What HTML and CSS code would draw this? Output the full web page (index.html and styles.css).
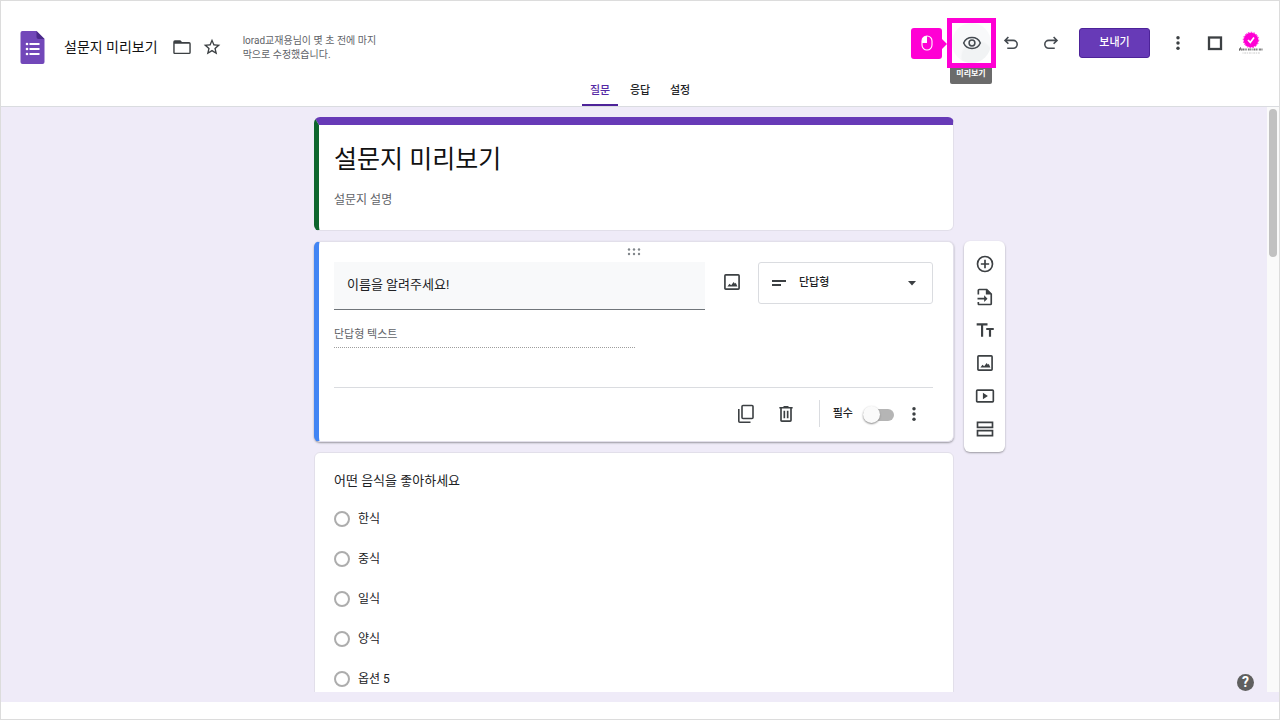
FILE: index.html
```html
<!DOCTYPE html>
<html lang="ko">
<head>
<meta charset="utf-8">
<meta name="viewport" content="width=device-width, initial-scale=1">
<title>설문지 미리보기</title>
<link rel="stylesheet" href="styles.css">
</head>
<body>
<svg class="sprite" aria-hidden="true">
  <symbol id="image" viewBox="0 0 24 24"><path d="M19.500 4.500v15h-15v-15h15m0-2h-15a2 2 0 0 0-2 2v15c0 1.100.9 2 2 2h15a2 2 0 0 0 2-2v-15a2 2 0 0 0-2-2zM6.500 17.500l2.500-3.500 2 2 3-4 1.500 2 1-1 2 4.500z"/></symbol>
  <symbol id="more" viewBox="0 0 24 24"><circle cx="12" cy="5" r="2.300"/><circle cx="12" cy="12" r="2.300"/><circle cx="12" cy="19" r="2.300"/></symbol>
</svg>
<div class="app">
  <header class="header">
    <div class="bar">
      <div class="bar-left">
        <svg class="logo" viewBox="0 0 24 33" role="img" aria-label="Forms"><path fill="#7248b9" d="M2 0h14l8 8v23a2 2 0 0 1-2 2H2a2 2 0 0 1-2-2V2a2 2 0 0 1 2-2z"/><path fill="#4b2a8a" d="M16 0l8 8h-6a2 2 0 0 1-2-2z"/><path fill="#fff" d="M9 12h10v2H9zm0 5h10v2H9zm0 5h10v2H9z"/><circle cx="6.500" cy="13" r="1.300" fill="#fff"/><circle cx="6.500" cy="18" r="1.300" fill="#fff"/><circle cx="6.500" cy="23" r="1.300" fill="#fff"/></svg>
        <h1 class="doc-title">설문지 미리보기</h1>
        <button class="icon-btn" aria-label="폴더로 이동"><svg class="icon-20" viewBox="0 0 24 24"><path d="M20.500 6H12l-2-2H3.500a2 2 0 0 0-2 2v12.500c0 1.100.9 2 2 2h17a2 2 0 0 0 2-2V8a2 2 0 0 0-2-2zm.3 12.800H3.200V8h17.600z"/></svg></button>
        <button class="icon-btn" aria-label="별표"><svg class="icon-20" viewBox="0 0 24 24"><path d="M22 9.240l-7.190-.62L12 2 9.190 8.630 2 9.240l5.460 4.730L5.820 21 12 17.270 18.180 21l-1.630-7.030zM12 15.400l-3.760 2.270 1-4.280-3.320-2.880 4.380-.38L12 6.100l1.710 4.040 4.380.38-3.320 2.880 1 4.280z"/></svg></button>
        <p class="saved">lorad교재용님이 몇 초 전에 마지막으로 수정했습니다.</p>
      </div>
      <div class="bar-right">
        <span class="click-badge"><svg viewBox="0 0 12 16" class="mouse"><rect x="1" y="1" width="10" height="14" rx="5" fill="none" stroke="#fff" stroke-width="1.100"/><path d="M6 1a5 5 0 0 0-5 5v2h5z" fill="#fff"/></svg></span>
        <span class="preview">
          <button class="preview-btn" aria-label="미리보기" aria-describedby="tip"><svg class="icon-20" viewBox="0 0 24 24"><path fill="none" stroke="#444a50" stroke-width="1.800" d="M2 12c1.700-4 5.500-6.500 10-6.500S20.300 8 22 12c-1.700 4-5.500 6.500-10 6.500S3.700 16 2 12z"/><circle cx="12" cy="12" r="3.500" fill="none" stroke="#444a50" stroke-width="1.800"/></svg></button>
          <span class="tip" id="tip" role="tooltip">미리보기</span>
        </span>
        <button class="icon-btn undo" aria-label="실행취소"><svg class="icon-18" viewBox="0 0 24 24"><path fill="none" stroke="#444a50" stroke-width="2.100" d="M8.500 4 4 8.500 8.500 13M4 8.500h11a5.200 5.200 0 0 1 0 10.500H7"/></svg></button>
        <button class="icon-btn redo" aria-label="재실행"><svg class="icon-18" viewBox="0 0 24 24"><path fill="none" stroke="#444a50" stroke-width="2.100" d="M15.500 4 20 8.500 15.500 13M20 8.500H9A5.200 5.200 0 0 0 9 19h8"/></svg></button>
        <button class="send">보내기</button>
        <button class="icon-btn menu" aria-label="더보기"><svg class="icon-18" viewBox="0 0 24 24"><use href="#more"/></svg></button>
        <button class="icon-btn" aria-label="앱"><svg class="icon-18" viewBox="0 0 18 18"><rect x="3" y="3.500" width="12" height="11.500" fill="none" stroke="#3c4043" stroke-width="2.300"/></svg></button>
        <button class="avatar" aria-label="계정"><svg viewBox="0 0 26 26" class="avatar-pic"><circle cx="13" cy="10" r="7.300" fill="#ff00d4"/><circle cx="13" cy="10" r="7.700" fill="none" stroke="#ff00d4" stroke-dasharray="1.600 1.380"/><path d="m10 10 2.300 2.500L16 7.500" fill="none" stroke="#fff" stroke-width="1.700"/><path d="M1 19.500h24" stroke="#777" stroke-width="1.800" stroke-dasharray="1.100 .6 .7 .9 1.800 .5"/><path d="M1.500 20.500 2.500 17.500l1 3" fill="none" stroke="#555" stroke-width=".8"/><path d="M4.500 23h18" stroke="#bbb" stroke-width=".8" stroke-dasharray="1 .8 2 .7"/></svg></button>
      </div>
    </div>
    <nav class="tabs">
      <button class="tab active">질문</button>
      <button class="tab">응답</button>
      <button class="tab">설정</button>
    </nav>
  </header>

  <main class="stage">
    <div class="scroller">
      <section class="card intro">
        <h2 class="form-title">설문지 미리보기</h2>
        <p class="form-desc">설문지 설명</p>
      </section>

      <section class="card question">
        <svg class="grip" viewBox="0 0 14 8"><g fill="#80868b"><circle cx="2" cy="1.500" r="1.200"/><circle cx="7" cy="1.500" r="1.200"/><circle cx="12" cy="1.500" r="1.200"/><circle cx="2" cy="6" r="1.200"/><circle cx="7" cy="6" r="1.200"/><circle cx="12" cy="6" r="1.200"/></g></svg>
        <div class="q-head">
          <input class="q-input" type="text" aria-label="질문" value="이름을 알려주세요!">
          <button class="icon-btn q-image" aria-label="이미지 추가"><svg class="icon-20" viewBox="0 0 24 24"><use href="#image"/></svg></button>
          <div class="q-type">
            <svg class="type-icon" viewBox="0 0 14 6"><path d="M0 0h14v2H0zm0 4h9v2H0z"/></svg>
            <select class="type-select" aria-label="질문 유형"><option>단답형</option></select>
            <svg class="caret" viewBox="0 0 10 5"><path d="M1 0h8L5 4.500z"/></svg>
          </div>
        </div>
        <p class="answer">단답형 텍스트</p>
        <div class="q-foot">
          <button class="icon-btn" aria-label="복사"><svg class="icon-20" viewBox="0 0 20 20"><rect x="6" y="1.500" width="11" height="13" rx="1" fill="none" stroke="#3c4043" stroke-width="1.600"/><path d="M2.800 5v12.200a1 1 0 0 0 1 1H14.500" fill="none" stroke="#3c4043" stroke-width="1.600"/></svg></button>
          <button class="icon-btn trash" aria-label="삭제"><svg class="icon-20" viewBox="0 0 24 24"><path d="M15 3.500v-1H9v1H4v2h1v14c0 1.100.9 2 2 2h10a2 2 0 0 0 2-2v-14h1v-2zm2 16H7v-14h10zM9 8h2v9H9zm4 0h2v9h-2z"/></svg></button>
          <label class="required">필수 <input type="checkbox" class="switch"></label>
          <button class="icon-btn" aria-label="더보기"><svg class="icon-18" viewBox="0 0 24 24"><use href="#more"/></svg></button>
        </div>
      </section>

      <aside class="tools">
        <button class="icon-btn" aria-label="질문 추가"><svg class="icon-20" viewBox="0 0 24 24"><path d="M13 7h-2v4H7v2h4v4h2v-4h4v-2h-4zM12 2a10 10 0 1 0 0 20 10 10 0 0 0 0-20zm0 18a8 8 0 1 1 0-16 8 8 0 0 1 0 16z"/></svg></button>
        <button class="icon-btn" aria-label="질문 가져오기"><svg class="icon-20" viewBox="0 0 24 24"><path d="M14.500 2H5a2 2 0 0 0-2 2v5h2V4h8v5h5.500v11H5v-2H3v2c0 1.100.9 2 2 2h13.500a2 2 0 0 0 2-2V8zM11 18l4-4-4-4v3H3v2h8z"/></svg></button>
        <button class="icon-btn" aria-label="제목 및 설명 추가"><svg class="icon-20" viewBox="0 0 24 24"><path d="M2 4v2.600h5.200V20h2.600V6.600H15V4zm20.500 5.500h-9V12h3.200v8h2.600v-8h3.200z"/></svg></button>
        <button class="icon-btn" aria-label="이미지 추가"><svg class="icon-20" viewBox="0 0 24 24"><use href="#image"/></svg></button>
        <button class="icon-btn" aria-label="동영상 추가"><svg class="icon-20" viewBox="0 0 24 24"><path d="M9.500 8v8l6-4zM21 4H3a2 2 0 0 0-2 2v12c0 1.100.9 2 2 2h18a2 2 0 0 0 2-2V6a2 2 0 0 0-2-2zm0 14H3V6h18z"/></svg></button>
        <button class="icon-btn" aria-label="섹션 추가"><svg class="icon-20" viewBox="0 0 24 24"><path d="M20 5v4H4V5h16m2-2H2v8h20zm-2 12v4H4v-4h16m2-2H2v8h20z"/></svg></button>
      </aside>

      <section class="card choices">
        <h3 class="choice-title">어떤 음식을 좋아하세요</h3>
        <label class="choice"><input type="radio" name="food">한식</label>
        <label class="choice"><input type="radio" name="food">중식</label>
        <label class="choice"><input type="radio" name="food">일식</label>
        <label class="choice"><input type="radio" name="food">양식</label>
        <label class="choice"><input type="radio" name="food">옵션 5</label>
      </section>
    </div>
    <div class="track"><div class="thumb"></div></div>
    <button class="help" aria-label="도움말">?</button>
  </main>
</div>
</body>
</html>
```
FILE: styles.css
```css
* { box-sizing: border-box; }
body {
  margin: 0;
  font-family: Roboto, "Noto Sans CJK KR", sans-serif;
  font-size: 12px;
  line-height: 20px;
  color: #202124;
  background: #fff;
}
h1, h2, h3, p { margin: 0; font-weight: 400; }
button, input, select { font: inherit; color: inherit; }
button { border: 0; padding: 0; background: none; cursor: pointer; }
.sprite { display: none; }

.app {
  display: flex;
  flex-direction: column;
  height: 100vh;
  padding-bottom: 17px;
  border: 1px solid #dcdcdc;
}

.icon-btn { display: flex; align-items: center; justify-content: center; flex: none; fill: #3c4043; }
.icon-20 { width: 20px; height: 20px; }
.icon-18 { width: 18px; height: 18px; }

/* Header */
.header { flex: none; border-bottom: 1px solid #dadce0; }
.bar { display: flex; justify-content: space-between; padding: 17px 15px 0 19px; height: 74px; }
.bar-left { display: flex; align-items: center; height: 58px; }
.logo { width: 25px; height: 33px; margin-right: 19px; }
.doc-title { font-size: 14px; margin-right: 14px; color: #111; white-space: nowrap; }
.bar-left .icon-btn { margin-right: 10px; }
.saved { width: 136px; margin-left: 11px; padding-top: 2px; font-size: 10px; line-height: 14px; color: #5f6368; word-break: break-all; }
.bar-right { display: flex; align-items: center; height: 50px; }

.click-badge {
  position: relative;
  display: flex;
  align-items: center;
  justify-content: center;
  width: 31px;
  height: 31px;
  margin-right: 5px;
  border-radius: 3px;
  background: #ff00d4;
}
.click-badge::after {
  content: "";
  position: absolute;
  left: 100%;
  top: 11px;
  border: 5px solid transparent;
  border-right-width: 0;
  border-left-color: #ff00d4;
}
.mouse { width: 12px; height: 16px; }
.preview { position: relative; flex: none; border: 5px solid #ff00d4; }
.preview-btn {
  display: flex;
  align-items: center;
  justify-content: center;
  width: 39px;
  height: 40px;
  border-radius: 50%;
  background: radial-gradient(circle at 65% 85%, #f1f3f4 35%, #f8f9fa 40%);
}
.tip {
  position: absolute;
  z-index: -1;
  left: -2px;
  top: 40px;
  width: 42px;
  padding: 3px 0 2px;
  border-radius: 2px;
  background: #6b6b6b;
  color: #fff;
  font-size: 8px;
  font-weight: 700;
  line-height: 16px;
  text-align: center;
}
.undo { margin-left: 6px; }
.redo { margin-left: 22px; }
.send {
  width: 71px;
  height: 30px;
  margin: 0 19px 0 19px;
  border: 1px solid #4d2399;
  border-radius: 3px;
  background: #673ab7;
  color: #fff;
  font-size: 11px;
  font-weight: 500;
}
.menu { margin-right: 19px; }
.avatar { margin-left: 14px; }
.avatar-pic { display: block; width: 26px; height: 26px; }

.tabs { display: flex; justify-content: center; gap: 4px; height: 31px; }
.tab { width: 36px; padding-top: 3px; border-bottom: 2px solid transparent; font-size: 11px; font-weight: 500; }
.tab.active { color: #5529a5; border-bottom-color: #4d2399; }

/* Form canvas */
.stage { position: relative; flex: 1; display: flex; min-height: 0; padding-bottom: 10px; background: #efebf8; }
.scroller {
  flex: 1;
  display: grid;
  grid-template-columns: minmax(0, 1fr) minmax(0, 640px) minmax(0, 1fr);
  grid-auto-rows: max-content;
  align-content: start;
  gap: 10px;
  padding-top: 10px;
  overflow: hidden;
}
.track { width: 12px; padding: 2px; background: #fafafa; }
.thumb { height: 148px; border-radius: 4px; background: #c1c1c1; }

.card {
  position: relative;
  grid-column: 2;
  border: 1px solid #e2dfea;
  border-radius: 6px;
  background: #fff;
  overflow: hidden;
}
.intro { padding: 18px 19px 20px 15px; border-top: 8px solid #673ab7; border-left: 5px solid #0d652d; }
.form-title { font-size: 25px; line-height: 34px; color: #111; }
.form-desc { margin-top: 13px; color: #5f6368; }

.question { padding: 6px 20px 0 15px; border-left: 5px solid #4285f4; box-shadow: 0 1px 2px #9a98a0; }
.grip { display: block; width: 14px; height: 8px; margin: 0 auto 6px; }
.q-head { display: flex; align-items: flex-start; }
.q-input {
  flex: 1;
  min-width: 0;
  height: 48px;
  padding: 0 13px 4px;
  border: 0;
  border-bottom: 1px solid #70757a;
  background: #f8f9fa;
  font-size: 13px;
}
.q-image { width: 53px; height: 40px; }
.q-type {
  display: flex;
  align-items: center;
  width: 175px;
  height: 42px;
  padding: 0 15px 0 13px;
  border: 1px solid #dadce0;
  border-radius: 3px;
  fill: #3c4043;
}
.type-icon { width: 14px; height: 6px; margin-right: 13px; }
.type-select { flex: 1; min-width: 0; padding: 0; border: 0; appearance: none; background: none; font-size: 11px; font-weight: 500; }
.caret { width: 10px; height: 5px; }
.answer { width: 301px; margin-top: 15px; padding-bottom: 2px; border-bottom: 1px dotted #9e9e9e; font-size: 11px; color: #5f6368; }
.q-foot { display: flex; align-items: center; justify-content: flex-end; height: 54px; margin-top: 39px; padding: 0 10px 2px 0; border-top: 1px solid #dadce0; }
.trash { margin: 0 23px 0 20px; }
.required { display: flex; align-items: center; height: 27px; padding-left: 13px; border-left: 1px solid #dadce0; font-size: 11px; font-weight: 500; }
.switch {
  appearance: none;
  display: flex;
  align-items: center;
  width: 31px;
  height: 12px;
  margin: 2px 11px 0 10px;
  border-radius: 6px;
  background: #b5b5b5;
}
.switch::before { content: ""; width: 17px; height: 17px; border-radius: 50%; background: #fafafa; box-shadow: 0 1px 2px #888; }

.tools {
  grid-column: 3;
  grid-row: 2 / span 2;
  align-self: start;
  justify-self: start;
  display: flex;
  flex-direction: column;
  gap: 13px;
  width: 41px;
  padding: 13px 0;
  border-radius: 6px;
  background: #fff;
  box-shadow: 0 1px 2px #9a98a0;
}

.choices { padding: 18px 19px 20px; }
.choice-title { margin-bottom: 8px; font-size: 13px; }
.choice { display: flex; align-items: center; height: 40px; }
.choice input { appearance: none; width: 16px; height: 16px; margin: 0 8px 0 0; border: 2px solid #adadad; border-radius: 50%; }

.help {
  position: absolute;
  right: 25px;
  bottom: 11px;
  width: 17px;
  height: 17px;
  border-radius: 50%;
  background: #5f5f5f;
  color: #fff;
  font-size: 14px;
  font-weight: 700;
  line-height: 17px;
}
```
